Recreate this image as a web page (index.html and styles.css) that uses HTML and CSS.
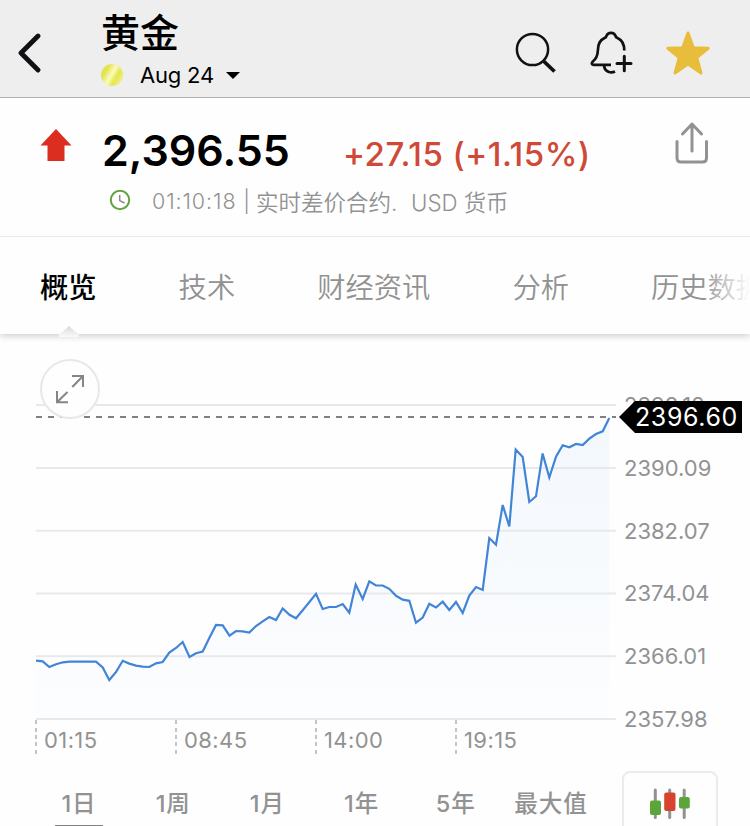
FILE: index.html
```html
<!DOCTYPE html>
<html lang="zh-CN">
<head>
    <meta charset="UTF-8">
    <meta name="viewport" content="width=device-width, initial-scale=1.0">
    <title>黄金</title>
    <link rel="stylesheet" href="styles.css">
</head>
<body>
    <header class="topbar">
        <svg class="back" width="26" height="40" viewBox="0 0 26 40">
            <path d="M21 3 L4 20 L21 37" />
        </svg>
        <div class="instrument">
            <h1>黄金</h1>
            <div class="contract">
                <span class="coin"></span>
                <span class="month">Aug 24</span>
                <span class="caret"></span>
            </div>
        </div>
        <div class="actions">
            <svg width="44" height="44" viewBox="0 0 44 44">
                <circle cx="19.5" cy="19.5" r="15.6" fill="none" stroke="#101114" stroke-width="2.5" />
                <path d="M30.5 31 L41.5 41.5" stroke="#101114" stroke-width="3.8" />
            </svg>
            <svg class="bell" width="46" height="46" viewBox="0 0 46 46">
                <path d="M22 34.9 H4.5 Q1.7 34.3 3.4 32 C7 28.5 8.6 26.5 8.9 20 C9 13.5 11.5 9.8 15.5 8 Q17.2 7.4 17.4 6 C19 1.8 25 1.8 26.6 6 Q26.8 7.4 28.5 8 C33 10 35.3 14 35.3 20.5" />
                <path d="M15 36 C16 42 22 43.5 26 41.5" />
                <path class="plus" d="M35.3 26.3 V40.8 M28 33.5 H42" />
            </svg>
            <svg class="star" width="46" height="46" viewBox="0 0 46 46">
                <path d="M23 3 L28.3 17.8 L43.2 18.3 L31.8 27.6 L36 43 L23 34 L10 43 L14.2 27.6 L2.8 18.3 L17.7 17.8 Z" />
            </svg>
        </div>
    </header>

    <section class="quote">
        <svg class="up" width="32" height="32" viewBox="0 0 32 32">
            <path d="M16 0 L31.5 16.5 H24.5 V32 H7.5 V16.5 H0.5 Z" fill="#dc2e20" />
        </svg>
        <div class="quoteMain">
            <div class="prices">
                <span class="last">2,396.55</span>
                <span class="change">+27.15 (+1.15%)</span>
            </div>
            <div class="info">
                <svg width="22" height="22" viewBox="0 0 22 22">
                    <circle cx="11" cy="10" r="9.2" fill="none" stroke="#62a33c" stroke-width="2" />
                    <path d="M10.7 5 V10.6 L15.5 13" fill="none" stroke="#888" stroke-width="1.5" />
                </svg>
                <span class="time">01:10:18 |</span>
                <span class="kind">实时差价合约.</span>
                <span class="currency">USD 货币</span>
            </div>
        </div>
        <svg class="share" width="34" height="42" viewBox="0 0 34 42">
            <path d="M2 19.5 V36 Q2 40 6 40 H27.5 Q31.5 40 31.5 36 V19.5 M17 29 V2 M7.5 12 L17 2 L26.5 12" />
        </svg>
    </section>

    <nav class="tabs">
        <a class="active">概览</a>
        <a>技术</a>
        <a>财经资讯</a>
        <a>分析</a>
        <a>历史数据</a>
        <svg class="notch" width="20" height="12" viewBox="0 0 20 12">
            <defs>
                <linearGradient id="notchFill" x1="0" y1="0" x2="0" y2="1">
                    <stop offset="0" stop-color="#dadada" />
                    <stop offset="1" stop-color="#fafafa" />
                </linearGradient>
            </defs>
            <path d="M0 9 Q4 7 10 1 Q16 7 20 9 V12 H0 Z" fill="url(#notchFill)" />
        </svg>
    </nav>

    <main class="chart">
        <div class="plot">
            <svg width="586" height="330" viewBox="36 391 586 330">
                <defs>
                    <linearGradient id="fade" x1="0" y1="418" x2="0" y2="719" gradientUnits="userSpaceOnUse">
                        <stop offset="0" stop-color="#f3f8fd" />
                        <stop offset="1" stop-color="#fcfdfe" />
                    </linearGradient>
                </defs>
                <path id="area" fill="url(#fade)" />
                <path class="grid" d="M36 405 H616 M36 468 H616 M36 530.8 H616 M36 593.4 H616 M36 656.2 H616 M36 719 H616" />
                <path class="level" d="M36 417 H616" />
                <path id="line" />
            </svg>
            <div class="hours">
                <span>01:15</span>
                <span>08:45</span>
                <span>14:00</span>
                <span>19:15</span>
            </div>
        </div>
        <div class="axis">
            <span>2398.12</span>
            <span>2390.09</span>
            <span>2382.07</span>
            <span>2374.04</span>
            <span>2366.01</span>
            <span>2357.98</span>
        </div>
        <div class="tag">2396.60</div>
        <div class="expand">
            <svg width="30" height="30" viewBox="0 0 30 30">
                <path d="M17 2 H28 V13 M28 2 L17.3 13 M2 17 V28.2 H13 M2 28.2 L12.5 18" />
            </svg>
        </div>
    </main>

    <footer class="ranges">
        <a class="active">1日</a>
        <a>1周</a>
        <a>1月</a>
        <a>1年</a>
        <a>5年</a>
        <a>最大值</a>
        <div class="candles">
            <svg width="42" height="32" viewBox="0 0 42 32">
                <path d="M6.3 2 V29.5 M20.7 2 V29.5 M35.2 2 V29.5" stroke="#929292" stroke-width="3" stroke-linecap="round" />
                <rect x="1" y="12.5" width="11" height="14.5" rx="2" fill="#5ba53a" />
                <rect x="15.2" y="4.5" width="11.3" height="18.5" rx="2" fill="#d8432f" />
                <rect x="30" y="9" width="10.8" height="11.5" rx="2" fill="#5ba53a" />
            </svg>
        </div>
    </footer>

    <script>
        var points = [
            [36, 660.7], [42.7, 661.3], [49.3, 667], [56, 664.3], [63, 662.3], [69.5, 661.7], [96, 661.7],
            [102.7, 667.5], [109.3, 680], [116, 672], [122.7, 660.8], [129.3, 663.6], [136, 665.6], [142.7, 666.7],
            [149.3, 667], [156, 663.3], [162.7, 662], [169.3, 652.5], [176, 648], [182.7, 642], [189.5, 657],
            [196, 653.2], [202.7, 651.5], [209.3, 638], [216, 625], [222.7, 625.3], [229.5, 635.7], [236, 631],
            [242.7, 631.3], [249.3, 632.5], [256, 626], [262.7, 621.3], [269.3, 617], [276, 620], [282.7, 608.5],
            [289.5, 614.8], [296, 618.3], [302.7, 610.3], [316, 593.8], [322.7, 609], [329.3, 607], [336, 607],
            [342.7, 604], [349.3, 612.7], [355.7, 584.5], [362.7, 599], [369.3, 581.3], [376, 585.5], [382.7, 585.5],
            [389.3, 588.8], [396, 595.8], [402.7, 599.6], [409.3, 600.8], [416, 622.7], [422.7, 617.5], [429.3, 603.7],
            [436, 607.5], [442.7, 601.7], [449.3, 610], [456, 602], [462.7, 613], [469.3, 595.5], [476, 587],
            [482.7, 590], [489.3, 538], [496, 544.7], [502.7, 505], [509.3, 526.5], [515.7, 449.5], [522.7, 457],
            [529.3, 502], [536, 496.3], [542.6, 453.5], [549.3, 477.5], [556, 456.7], [562.7, 445.3], [569.3, 447.3],
            [576, 444], [582.7, 445], [589.3, 438.7], [596, 434], [602.7, 431.3], [609.3, 418]
        ];

        var d = "M" + points.map(function(p) { return p.join(" "); }).join(" L");
        document.getElementById("line").setAttribute("d", d);
        document.getElementById("area").setAttribute("d", d + " V719 H36 Z");
    </script>
</body>
</html>
```
FILE: styles.css
```css
* {
    box-sizing: border-box;
}

body {
    margin: 0;
    width: 750px;
    height: 826px;
    overflow: hidden;
    background-color: #fefefe;
    font-family: Inter, "Noto Sans CJK SC", sans-serif;
    color: #929292;
    white-space: nowrap;
}

svg {
    display: block;
    flex: none;
}

/* header */
.topbar {
    display: flex;
    height: 98px;
    background-color: #eee;
    border-bottom: 1px solid #b2b2b2;
    color: #000;
}

.back {
    margin: 33px 0 0 17px;
    fill: none;
    stroke: #101114;
    stroke-width: 4.8;
    stroke-linecap: round;
    stroke-linejoin: round;
}

.instrument {
    width: 412px;
    margin-left: 58px;
    padding-top: 6px;
}

h1 {
    margin: 0;
    font-size: 39px;
    font-weight: 500;
    line-height: 54px;
}

.contract {
    display: flex;
    align-items: center;
    height: 30px;
}

.coin {
    width: 22px;
    height: 22px;
    border-radius: 50%;
    background: linear-gradient(120deg, #e2e34d 25%, #fbfbbd 48%, #e5e64e 66%, #f1f18b 90%);
}

.month {
    width: 74px;
    margin-left: 17px;
    font-size: 22px;
    letter-spacing: -0.2px;
}

.caret {
    margin-left: 12px;
    border: 7px solid transparent;
    border-top-color: #000;
    border-bottom: 0;
}

.actions {
    display: flex;
    padding-top: 30px;
}

.bell {
    margin-left: 32px;
    fill: none;
    stroke: #101114;
    stroke-width: 2.7;
    stroke-linecap: butt;
}

.plus {
    stroke-width: 3;
    stroke-linecap: round;
}

.star {
    margin-left: 30px;
    fill: #e8bd3c;
    stroke: #e8bd3c;
    stroke-width: 3;
    stroke-linejoin: round;
}

/* price */
.quote {
    display: flex;
    height: 139px;
    padding-left: 40px;
    border-bottom: 1px solid #e8e8e8;
}

.up {
    margin-top: 31px;
}

.quoteMain {
    width: 573px;
    margin-left: 30px;
    padding-top: 24px;
}

.prices {
    display: flex;
    align-items: baseline;
    height: 66px;
    line-height: 56px;
}

.last {
    width: 241px;
    font-size: 43px;
    font-weight: 600;
    color: #000;
}

.change {
    font-size: 33px;
    font-weight: 500;
    letter-spacing: 0.5px;
    color: #cf4936;
}

.info {
    display: flex;
    align-items: center;
    height: 26px;
    padding-left: 7px;
    font-size: 22px;
    font-weight: 350;
}

.time {
    width: 98px;
    margin-left: 21px;
    font-size: 21.5px;
    letter-spacing: 0.9px;
}

.kind {
    width: 148px;
    margin-left: 6px;
    font-size: 22.5px;
}

.currency {
    margin-left: 7px;
    font-size: 22.3px;
}

.share {
    margin-top: 24px;
    fill: none;
    stroke: #929292;
    stroke-width: 3;
    stroke-linecap: round;
    stroke-linejoin: round;
}

/* tabs */
.tabs {
    position: relative;
    display: flex;
    gap: 82px;
    height: 97px;
    padding: 30px 0 0 40px;
    font-size: 28.3px;
    font-weight: 350;
    line-height: 42px;
    box-shadow: 0 2px 7px rgba(0, 0, 0, 0.2);
    clip-path: inset(0 0 -16px 0);
    background-color: #fefefe;
}

.tabs .active {
    color: #000;
    font-weight: 500;
}

.tabs::after {
    content: "";
    position: absolute;
    top: 0;
    right: 0;
    width: 48px;
    height: 90px;
    background: linear-gradient(to right, rgba(254, 254, 254, 0), #fefefe);
}

.notch {
    position: absolute;
    left: 59px;
    bottom: -3px;
}

/* chart */
.chart {
    position: relative;
    display: flex;
    height: 436px;
    padding: 57px 0 0 36px;
}

.plot {
    width: 588px;
}

.grid {
    stroke: #e7e9ea;
    stroke-width: 2;
}

.level {
    stroke: #808080;
    stroke-width: 2;
    stroke-dasharray: 6 6;
}

#line {
    fill: none;
    stroke: #4284d8;
    stroke-width: 2.2;
}

.hours {
    display: flex;
    margin: -1px 0 0 -1px;
    font-size: 22px;
    letter-spacing: 0.4px;
}

.hours span {
    width: 140px;
    height: 34px;
    padding: 7px 0 0 9px;
    line-height: 27px;
    background: repeating-linear-gradient(#c4c4c4 0 4px, transparent 4px 6px) no-repeat left / 2px 34px;
    background: repeating-linear-gradient(#c4c4c4 0 4px, transparent 4px 7.5px) no-repeat left / 2px 34px;
}

.axis {
    display: flex;
    flex-direction: column;
    margin-top: -17px;
    font-size: 22px;
    line-height: 62.8px;
}

.tag {
    position: absolute;
    top: 67px;
    left: 619px;
    width: 123px;
    height: 32px;
    padding-left: 16px;
    background-color: #000;
    clip-path: polygon(0 50%, 16px 0, 100% 0, 100% 100%, 16px 100%);
    color: #fff;
    font-size: 25px;
    letter-spacing: 0.6px;
    line-height: 32px;
}

.expand {
    position: absolute;
    top: 25px;
    left: 40px;
    width: 60px;
    height: 60px;
    padding: 13px;
    border: 2px solid #e8e8e8;
    border-radius: 50%;
    background-color: #fefefe;
}

.expand path {
    fill: none;
    stroke: #858585;
    stroke-width: 2;
}

/* ranges */
.ranges {
    display: flex;
    height: 56px;
    padding-left: 55px;
    font-size: 23.5px;
    font-weight: 500;
    letter-spacing: 0.9px;
    line-height: 34px;
    text-align: center;
}

.ranges a {
    width: 48px;
    height: 56px;
    margin-right: 46.2px;
    padding-top: 17px;
}

.ranges .active {
    border-bottom: 1px solid #808080;
}

.ranges a:nth-child(6) {
    width: 80px;
    margin: 0 31px 0 -15px;
}

.candles {
    width: 96px;
    height: 70px;
    margin-top: 1px;
    padding: 15px 0 0 25px;
    border: 2px solid #ebebeb;
    border-radius: 8px;
}
```
